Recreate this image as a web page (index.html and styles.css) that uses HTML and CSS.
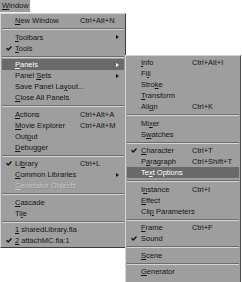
FILE: index.html
```html
<!DOCTYPE html>
<html lang="en">
<head>
  <meta charset="UTF-8">
  <title>Window menu</title>
  <link rel="stylesheet" href="styles.css">
</head>
<body>
  <div class="menubar">
    <span class="menu-title"><u>W</u>indow</span>
  </div>

  <div class="menus">
    <!-- Window menu -->
    <div class="menu menu-main">
      <div class="item"><span class="check"></span><span class="label"><u>N</u>ew Window</span><span class="key">Ctrl+Alt+N</span></div>
      <div class="sep"></div>
      <div class="item"><span class="check"></span><span class="label"><u>T</u>oolbars</span><span class="key"></span><span class="arrow"></span></div>
      <div class="item"><span class="check on"></span><span class="label"><u>T</u>ools</span></div>
      <div class="sep"></div>
      <div class="item active"><span class="check"></span><span class="label"><u>P</u>anels</span><span class="key"></span><span class="arrow"></span></div>
      <div class="item"><span class="check"></span><span class="label">Panel <u>S</u>ets</span><span class="key"></span><span class="arrow"></span></div>
      <div class="item"><span class="check"></span><span class="label">Save Panel La<u>y</u>out...</span></div>
      <div class="item"><span class="check"></span><span class="label"><u>C</u>lose All Panels</span></div>
      <div class="sep"></div>
      <div class="item"><span class="check"></span><span class="label"><u>A</u>ctions</span><span class="key">Ctrl+Alt+A</span></div>
      <div class="item"><span class="check"></span><span class="label"><u>M</u>ovie Explorer</span><span class="key">Ctrl+Alt+M</span></div>
      <div class="item"><span class="check"></span><span class="label">Out<u>p</u>ut</span></div>
      <div class="item"><span class="check"></span><span class="label"><u>D</u>ebugger</span></div>
      <div class="sep"></div>
      <div class="item"><span class="check on"></span><span class="label">Li<u>b</u>rary</span><span class="key">Ctrl+L</span></div>
      <div class="item"><span class="check"></span><span class="label"><u>C</u>ommon Libraries</span><span class="key"></span><span class="arrow"></span></div>
      <div class="item disabled"><span class="check"></span><span class="label"><u>G</u>enerator Objects</span></div>
      <div class="sep"></div>
      <div class="item"><span class="check"></span><span class="label"><u>C</u>ascade</span></div>
      <div class="item"><span class="check"></span><span class="label">Ti<u>l</u>e</span></div>
      <div class="sep"></div>
      <div class="item"><span class="check"></span><span class="label"><u>1</u> sharedLibrary.fla</span></div>
      <div class="item"><span class="check on"></span><span class="label"><u>2</u> attachMC.fla:1</span></div>
    </div>

    <!-- Panels submenu -->
    <div class="menu menu-sub">
      <div class="item"><span class="check"></span><span class="label"><u>I</u>nfo</span><span class="key">Ctrl+Alt+I</span></div>
      <div class="item"><span class="check"></span><span class="label">Fi<u>l</u>l</span></div>
      <div class="item"><span class="check"></span><span class="label">Stro<u>k</u>e</span></div>
      <div class="item"><span class="check"></span><span class="label"><u>T</u>ransform</span></div>
      <div class="item"><span class="check"></span><span class="label">Ali<u>g</u>n</span><span class="key">Ctrl+K</span></div>
      <div class="sep"></div>
      <div class="item"><span class="check"></span><span class="label">Mi<u>x</u>er</span></div>
      <div class="item"><span class="check"></span><span class="label">S<u>w</u>atches</span></div>
      <div class="sep"></div>
      <div class="item"><span class="check on"></span><span class="label"><u>C</u>haracter</span><span class="key">Ctrl+T</span></div>
      <div class="item"><span class="check"></span><span class="label">P<u>a</u>ragraph</span><span class="key">Ctrl+Shift+T</span></div>
      <div class="item active"><span class="check"></span><span class="label">Te<u>x</u>t Options</span></div>
      <div class="sep"></div>
      <div class="item"><span class="check"></span><span class="label">I<u>n</u>stance</span><span class="key">Ctrl+I</span></div>
      <div class="item"><span class="check"></span><span class="label"><u>E</u>ffect</span></div>
      <div class="item"><span class="check"></span><span class="label">Cli<u>p</u> Parameters</span></div>
      <div class="sep"></div>
      <div class="item"><span class="check"></span><span class="label"><u>F</u>rame</span><span class="key">Ctrl+F</span></div>
      <div class="item"><span class="check on"></span><span class="label">Sound</span></div>
      <div class="sep"></div>
      <div class="item"><span class="check"></span><span class="label"><u>S</u>cene</span></div>
      <div class="sep"></div>
      <div class="item"><span class="check"></span><span class="label"><u>G</u>enerator</span></div>
    </div>
  </div>
</body>
</html>
```

FILE: styles.css
```css
body {
  margin: 0;
  width: 242px;
  height: 282px;
  overflow: hidden;
  background: #fff;
  font-family: "Liberation Sans", Arial, sans-serif;
  font-size: 7.5px;
  color: #141414;
}

u {
  text-decoration: underline;
  text-underline-offset: 1px;
  text-decoration-thickness: 0.6px;
}

/* Menu bar */
.menubar {
  height: 13px;
  display: flex;
}

.menu-title {
  width: 31px;
  box-sizing: border-box;
  padding-left: 2px;
  line-height: 12px;
  background: #9c9c9c;
  border-right: 1px solid #f0f0f0;
  border-bottom: 1px solid #f0f0f0;
}

/* Menus */
.menus {
  display: flex;
  align-items: flex-start;
}

.menu {
  background: #9e9e9e;
  box-sizing: border-box;
  border: 1px solid;
  border-color: #d4d4d4 #3c3c3c #3c3c3c #d4d4d4;
  padding: 1px 1px 1px;
}

.menu-main {
  width: 126px;
}

.menu-sub {
  width: 116px;
  height: 240px;
  margin-top: 42px;
  margin-left: -1px;
  border-right-color: #4a4a4a;
}

.item {
  display: grid;
  grid-template-columns: 13px 65px 1fr 8px;
  align-items: center;
  height: 11px;
  white-space: nowrap;
}

.menu-sub .item {
  grid-template-columns: 14px 51px 1fr 4px;
}

.label,
.key {
  line-height: 11px;
}

.active {
  background: #6a6a6a;
  color: #fff;
}

.disabled {
  color: #c6c6c6;
  text-shadow: 0.6px 0.6px 0 #8a8a8a;
}

.check.on {
  height: 11px;
  background: no-repeat center / 6px 5px url("data:image/svg+xml,%3Csvg xmlns='http://www.w3.org/2000/svg' viewBox='0 0 6 5'%3E%3Cpath d='M0.5 2.3 L2.2 4 L5.5 0.6' fill='none' stroke='%23141414' stroke-width='1.4'/%3E%3C/svg%3E");
}

.arrow {
  width: 0;
  height: 0;
  border-top: 2.5px solid transparent;
  border-bottom: 2.5px solid transparent;
  border-left: 3px solid #141414;
}

.active .arrow {
  border-left-color: #fff;
}

.sep {
  height: 0;
  margin: 2px 0 1.5px;
  border-top: 1px solid #6c6c6c;
  border-bottom: 1px solid #d6d6d6;
}
```
